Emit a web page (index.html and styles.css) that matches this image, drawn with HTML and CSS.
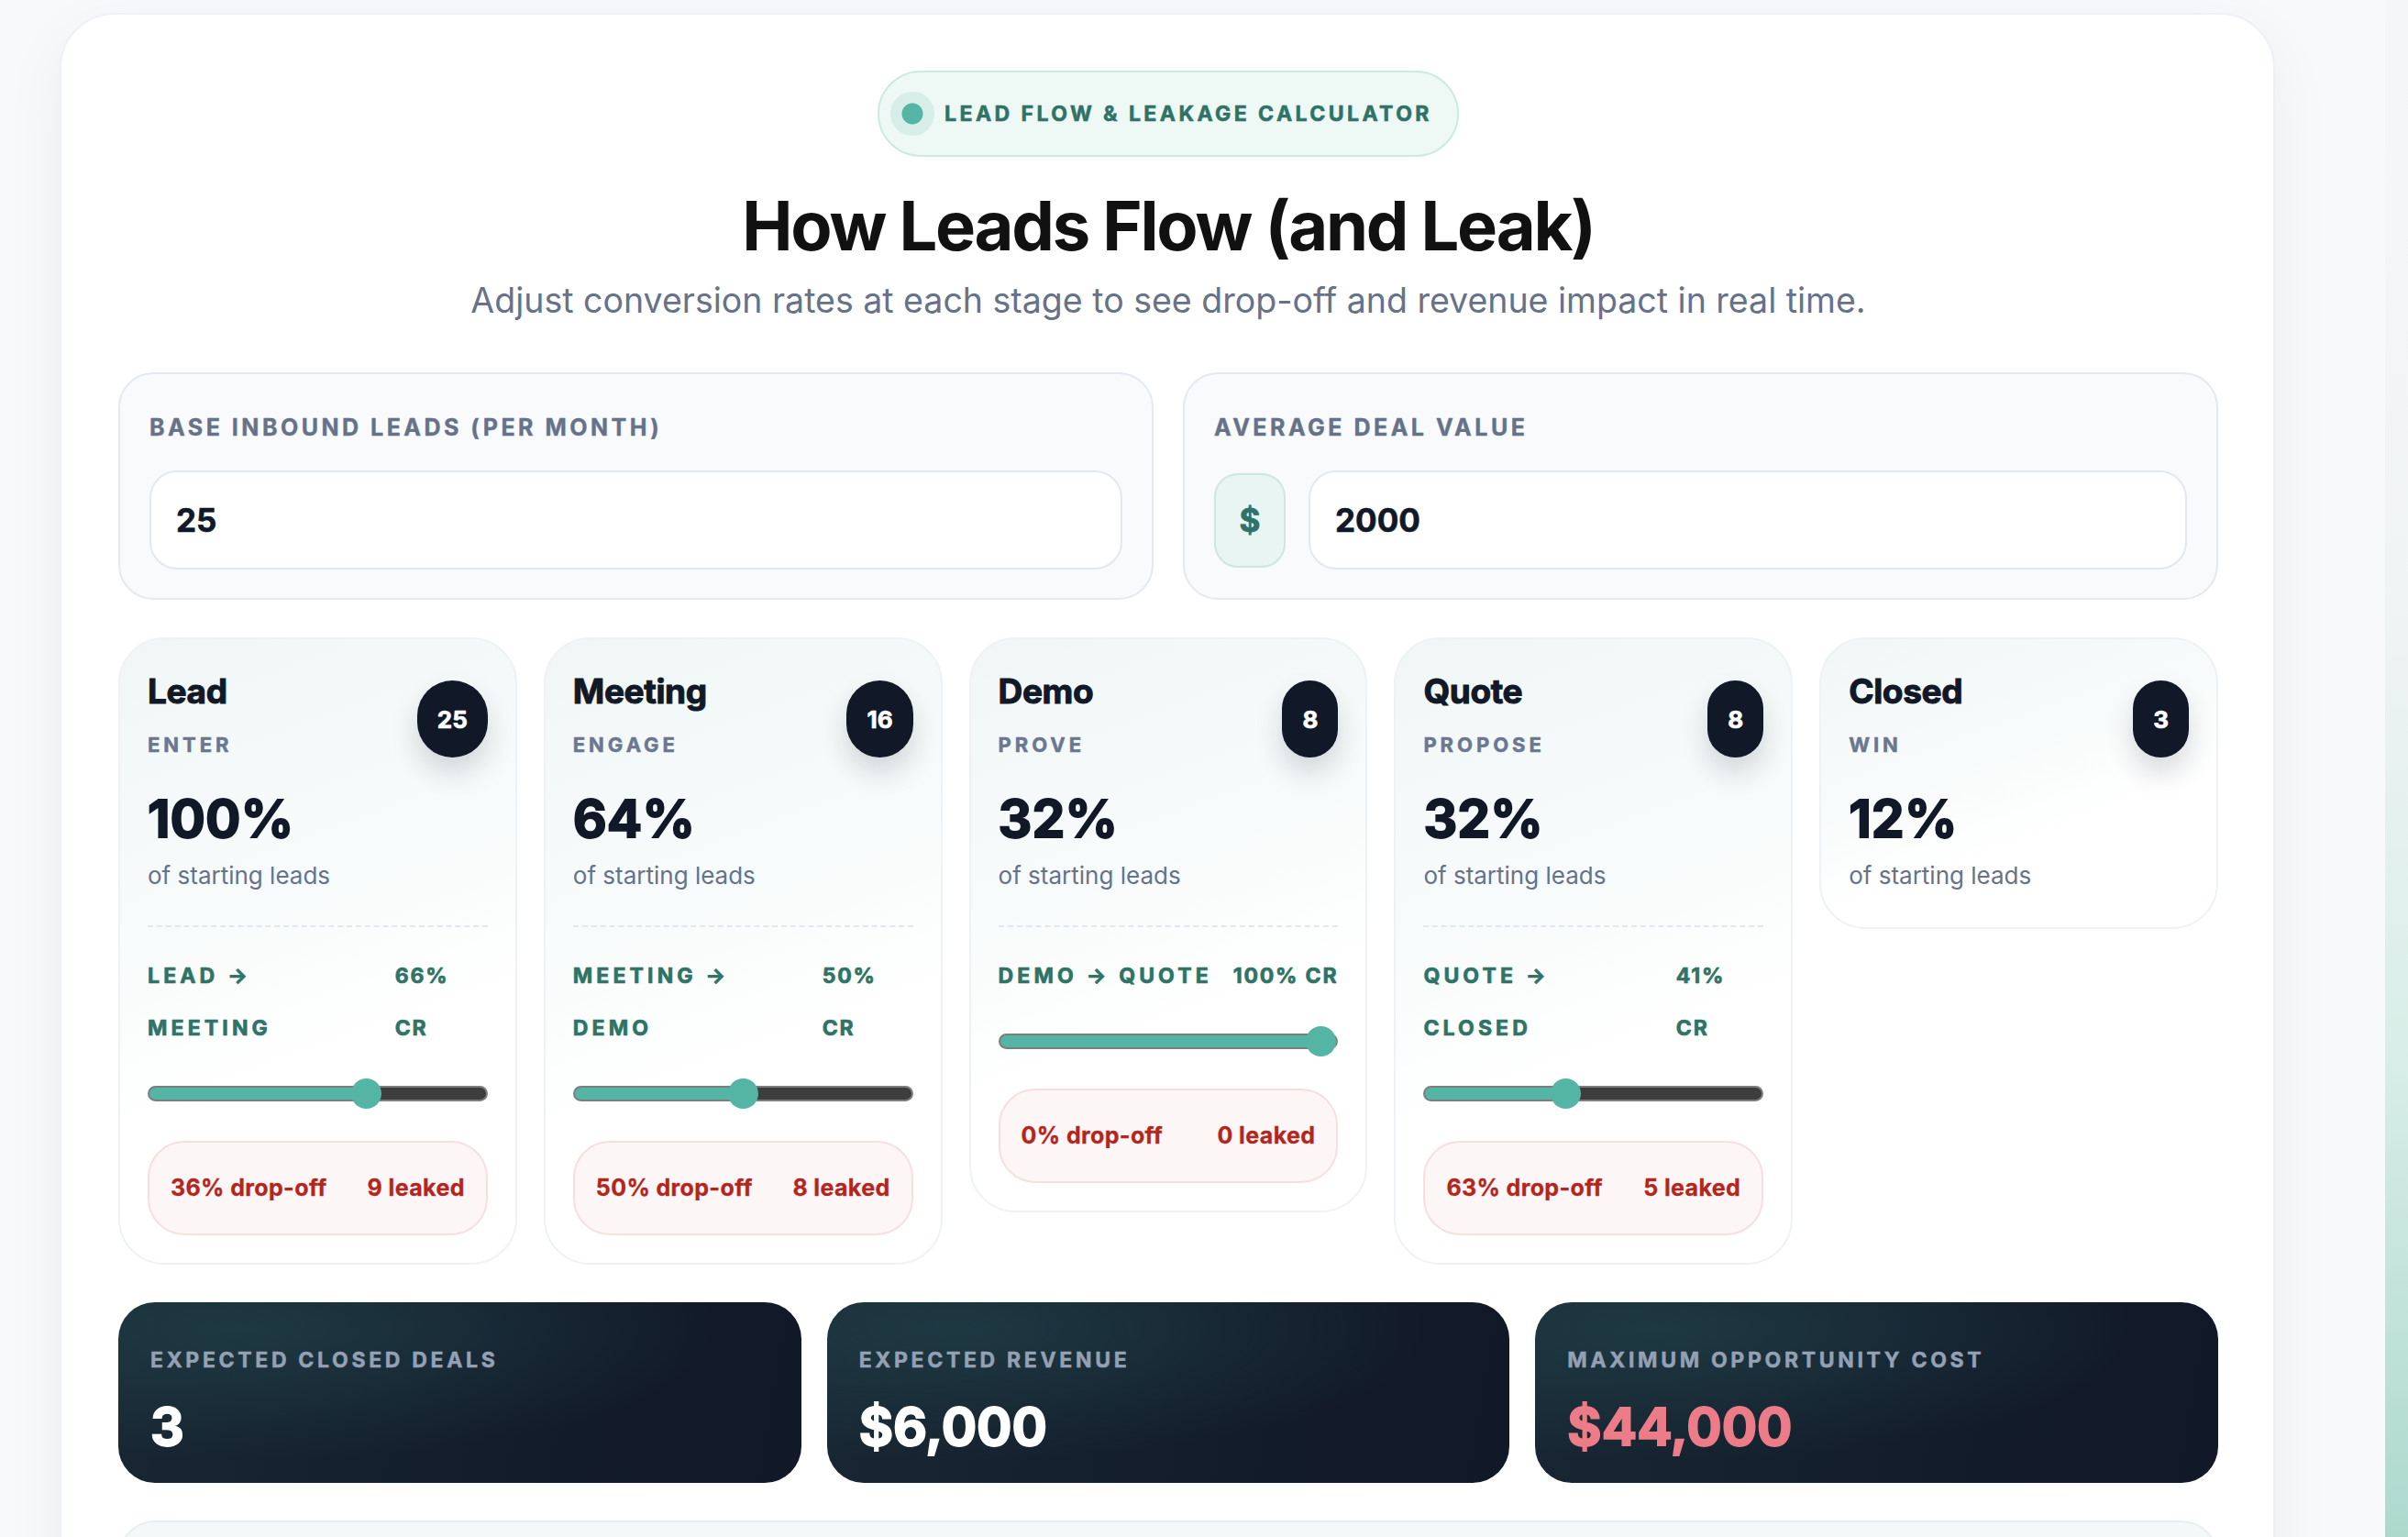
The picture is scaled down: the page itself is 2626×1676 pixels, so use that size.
FILE: index.html
```html
<!DOCTYPE html>
<html lang="en">

<head>
    <meta charset="UTF-8">
    <meta name="viewport" content="width=device-width, initial-scale=1.0">
    <title>Lead Flow &amp; Leakage Calculator</title>
    <link rel="stylesheet" href="styles.css">
</head>

<body>
    <div class="page">
        <main class="calc">
            <header class="calc-head">
                <div class="pill"><span class="pill-dot"></span>Lead Flow &amp; Leakage Calculator</div>
                <h1>How Leads Flow (and Leak)</h1>
                <p class="lede">Adjust conversion rates at each stage to see drop-off and revenue impact in real time.</p>
            </header>

            <section class="inputs">
                <div class="field">
                    <label for="leads">Base Inbound Leads (per month)</label>
                    <div class="field-row">
                        <input type="text" id="leads" class="field-input" value="25">
                    </div>
                </div>
                <div class="field">
                    <label for="deal">Average Deal Value</label>
                    <div class="field-row">
                        <span class="prefix">$</span>
                        <input type="text" id="deal" class="field-input" value="2000">
                    </div>
                </div>
            </section>

            <section class="stages">
                <div class="stage">
                    <div class="stage-top">
                        <div class="stage-head">
                            <div>
                                <h3>Lead</h3>
                                <div class="stage-tag">Enter</div>
                            </div>
                            <span class="count">25</span>
                        </div>
                        <div class="stage-pct">100%</div>
                        <div class="stage-note">of starting leads</div>
                    </div>
                    <div class="flow">
                        <div class="flow-head">
                            <span>Lead → Meeting</span>
                            <span class="flow-cr">66% CR</span>
                        </div>
                        <input type="range" class="rate" min="0" max="100" value="66" style="--fill: 64.5%">
                        <div class="leak">
                            <span>36% drop-off</span>
                            <span>9 leaked</span>
                        </div>
                    </div>
                </div>

                <div class="stage">
                    <div class="stage-top">
                        <div class="stage-head">
                            <div>
                                <h3>Meeting</h3>
                                <div class="stage-tag">Engage</div>
                            </div>
                            <span class="count">16</span>
                        </div>
                        <div class="stage-pct">64%</div>
                        <div class="stage-note">of starting leads</div>
                    </div>
                    <div class="flow">
                        <div class="flow-head">
                            <span>Meeting → Demo</span>
                            <span class="flow-cr">50% CR</span>
                        </div>
                        <input type="range" class="rate" min="0" max="100" value="50" style="--fill: 50%">
                        <div class="leak">
                            <span>50% drop-off</span>
                            <span>8 leaked</span>
                        </div>
                    </div>
                </div>

                <div class="stage">
                    <div class="stage-top">
                        <div class="stage-head">
                            <div>
                                <h3>Demo</h3>
                                <div class="stage-tag">Prove</div>
                            </div>
                            <span class="count">8</span>
                        </div>
                        <div class="stage-pct">32%</div>
                        <div class="stage-note">of starting leads</div>
                    </div>
                    <div class="flow">
                        <div class="flow-head">
                            <span>Demo → Quote</span>
                            <span class="flow-cr">100% CR</span>
                        </div>
                        <input type="range" class="rate" min="0" max="100" value="100" style="--fill: 100%">
                        <div class="leak">
                            <span>0% drop-off</span>
                            <span>0 leaked</span>
                        </div>
                    </div>
                </div>

                <div class="stage">
                    <div class="stage-top">
                        <div class="stage-head">
                            <div>
                                <h3>Quote</h3>
                                <div class="stage-tag">Propose</div>
                            </div>
                            <span class="count">8</span>
                        </div>
                        <div class="stage-pct">32%</div>
                        <div class="stage-note">of starting leads</div>
                    </div>
                    <div class="flow">
                        <div class="flow-head">
                            <span>Quote → Closed</span>
                            <span class="flow-cr">41% CR</span>
                        </div>
                        <input type="range" class="rate" min="0" max="100" value="41" style="--fill: 41.8%">
                        <div class="leak">
                            <span>63% drop-off</span>
                            <span>5 leaked</span>
                        </div>
                    </div>
                </div>

                <div class="stage">
                    <div class="stage-top">
                        <div class="stage-head">
                            <div>
                                <h3>Closed</h3>
                                <div class="stage-tag">Win</div>
                            </div>
                            <span class="count">3</span>
                        </div>
                        <div class="stage-pct">12%</div>
                        <div class="stage-note">of starting leads</div>
                    </div>
                </div>
            </section>

            <section class="results">
                <div class="result">
                    <div class="result-label">Expected Closed Deals</div>
                    <div class="result-value">3</div>
                </div>
                <div class="result">
                    <div class="result-label">Expected Revenue</div>
                    <div class="result-value">$6,000</div>
                </div>
                <div class="result">
                    <div class="result-label">Maximum Opportunity Cost</div>
                    <div class="result-value loss">$44,000</div>
                </div>
            </section>

            <section class="summary"></section>
        </main>
    </div>
    <div class="edge"></div>
</body>

</html>
```

FILE: styles.css
```css
body {
    display: flex;
    margin: 0;
    height: 100vh;
    overflow: hidden;
    font-family: Inter, 'Noto Sans', sans-serif;
    background: #f8f9fa;
    color: #111827;
}

.page {
    flex: 1;
    padding: 14px 120px 0 65px;
}

.edge {
    width: 25px;
    background: linear-gradient(to bottom, #f5f6f8 0%, #f1f4f5 38%, #d9eee8 68%, #add9cd 100%);
}

.calc {
    display: flex;
    flex-direction: column;
    gap: 41px;
    padding: 61px 60px 80px 62px;
    background: #fff;
    border: 2px solid #edf0f4;
    border-radius: 60px;
    box-shadow: 0 20px 70px rgba(15, 23, 42, 0.05);
}

/* header */
.calc-head {
    display: flex;
    flex-direction: column;
    align-items: center;
    margin-bottom: 11px;
}

.pill {
    display: inline-flex;
    align-items: center;
    gap: 11px;
    padding: 21px 27px 21px 12px;
    border: 2px solid #cbeae2;
    border-radius: 48px;
    background: #eef8f5;
    color: #2f7367;
    font-size: 23px;
    font-weight: 700;
    letter-spacing: 0.15em;
    text-transform: uppercase;
    -webkit-text-stroke: 0.6px currentColor;
}

.pill-dot {
    width: 48px;
    height: 48px;
    border-radius: 50%;
    background: radial-gradient(circle, #55b5a4 0 11px, #d6ede8 12px);
}

h1 {
    margin: 35px 0 0;
    font-size: 74px;
    line-height: 81px;
    font-weight: 700;
    letter-spacing: -0.03em;
    color: #111;
}

.lede {
    margin: 15px 0 0;
    font-size: 37.5px;
    line-height: 52px;
    color: #667289;
}

/* inputs */
.inputs {
    display: grid;
    grid-template-columns: 1fr 1fr;
    gap: 32px;
}

.field {
    padding: 40px 32px 31px;
    background: #f8fafc;
    border: 2px solid #e4e9ef;
    border-radius: 38px;
}

.field label {
    display: block;
    margin-bottom: 29px;
    font-size: 25px;
    line-height: 36px;
    font-weight: 700;
    letter-spacing: 0.14em;
    text-transform: uppercase;
    color: #667289;
    -webkit-text-stroke: 0.4px currentColor;
}

.field-row {
    display: flex;
    align-items: center;
    gap: 25px;
}

.prefix {
    display: flex;
    align-items: center;
    justify-content: center;
    flex: none;
    width: 74px;
    height: 99px;
    background: #e9f5f2;
    border: 2px solid #cce8e0;
    border-radius: 26px;
    color: #2f7367;
    font-size: 35px;
    font-weight: 700;
    -webkit-text-stroke: 0.8px currentColor;
}

.field-input {
    flex: 1;
    min-width: 0;
    height: 108px;
    box-sizing: border-box;
    padding: 0 27px;
    border: 2px solid #e3e8ee;
    border-radius: 30px;
    background: #fff;
    font-family: inherit;
    font-size: 35px;
    font-weight: 700;
    color: #111827;
    outline: none;
    -webkit-text-stroke: 0.6px #111827;
}

/* stage cards */
.stages {
    display: grid;
    grid-template-columns: repeat(5, 1fr);
    gap: 29px;
    align-items: start;
}

.stage {
    padding: 34px 30px 30px;
    border: 2px solid #eef1f5;
    border-radius: 50px;
    background: linear-gradient(160deg, #f0f6f6 0%, #f8fbfb 40%, #fff 65%);
}

.stage-top {
    padding-bottom: 8px;
}

.stage-head {
    display: flex;
    justify-content: space-between;
    align-items: flex-start;
}

.stage h3 {
    margin: 0;
    font-size: 37px;
    line-height: 46px;
    font-weight: 700;
    letter-spacing: -0.01em;
    -webkit-text-stroke: 1px currentColor;
}

.stage-tag {
    margin-top: 20px;
    font-size: 22px;
    line-height: 30px;
    font-weight: 700;
    letter-spacing: 0.18em;
    text-transform: uppercase;
    color: #6b7791;
    -webkit-text-stroke: 0.5px currentColor;
}

.count {
    display: flex;
    align-items: center;
    justify-content: center;
    min-width: 16px;
    height: 84px;
    margin-top: 11px;
    padding: 0 22px;
    border-radius: 42px;
    background: #111827;
    color: #fff;
    font-size: 26px;
    font-weight: 700;
    -webkit-text-stroke: 0.7px currentColor;
    box-shadow: 0 16px 30px rgba(15, 23, 42, 0.16);
}

.stage-pct {
    margin-top: 34px;
    font-size: 57px;
    line-height: 63px;
    font-weight: 700;
    -webkit-text-stroke: 1.8px currentColor;
}

.stage-note {
    margin-top: 13px;
    font-size: 26px;
    line-height: 36px;
    color: #667289;
}

.flow {
    margin-top: 28px;
    padding-top: 25px;
    border-top: 2px dashed #e2e6ed;
}

.flow-head {
    display: flex;
    justify-content: space-between;
    gap: 14px;
    font-size: 23px;
    line-height: 57px;
    font-weight: 700;
    letter-spacing: 0.18em;
    text-transform: uppercase;
    color: #2f7367;
    -webkit-text-stroke: 0.7px currentColor;
}

.flow-cr {
    letter-spacing: 0.08em;
}

/* slider */
.rate {
    display: block;
    width: 100%;
    height: 34px;
    margin: 25px 0 0;
    background: transparent;
    -webkit-appearance: none;
    appearance: none;
}

.rate::-webkit-slider-runnable-track {
    height: 17px;
    box-sizing: border-box;
    border: 2px solid #7d7d7d;
    border-radius: 9px;
    background: linear-gradient(to right, #55b5a4 var(--fill), #3d3d3d var(--fill));
}

.rate::-webkit-slider-thumb {
    -webkit-appearance: none;
    width: 33px;
    height: 33px;
    margin-top: -10px;
    border-radius: 50%;
    background: #55b5a4;
}

.leak {
    display: flex;
    justify-content: space-between;
    gap: 12px;
    margin-top: 35px;
    padding: 34px 23px;
    border: 2px solid #f8dfdf;
    border-radius: 40px;
    background: #fdf6f6;
    color: #b3261e;
    font-size: 25px;
    line-height: 31px;
    font-weight: 700;
    letter-spacing: 0.015em;
    -webkit-text-stroke: 0.3px currentColor;
}

/* results */
.results {
    display: grid;
    grid-template-columns: repeat(3, 1fr);
    gap: 28px;
}

.result {
    padding: 47px 35px 30px;
    border-radius: 40px;
    background:
        radial-gradient(ellipse at 18% 15%, rgba(32, 64, 72, 0.75) 0%, rgba(32, 64, 72, 0) 60%),
        linear-gradient(100deg, #182733 0%, #131c2b 60%, #111827 100%);
}

.result-label {
    font-size: 23px;
    line-height: 32px;
    font-weight: 700;
    letter-spacing: 0.16em;
    text-transform: uppercase;
    color: #94a0b3;
    -webkit-text-stroke: 0.5px currentColor;
}

.result-value {
    margin-top: 25px;
    font-size: 57px;
    line-height: 63px;
    font-weight: 700;
    color: #fff;
    -webkit-text-stroke: 1.8px currentColor;
}

.result-value.loss {
    color: #ec7c87;
}

.summary {
    height: 240px;
    background: #f3f8f8;
    border: 2px solid #e8eff1;
    border-radius: 40px;
}
```
